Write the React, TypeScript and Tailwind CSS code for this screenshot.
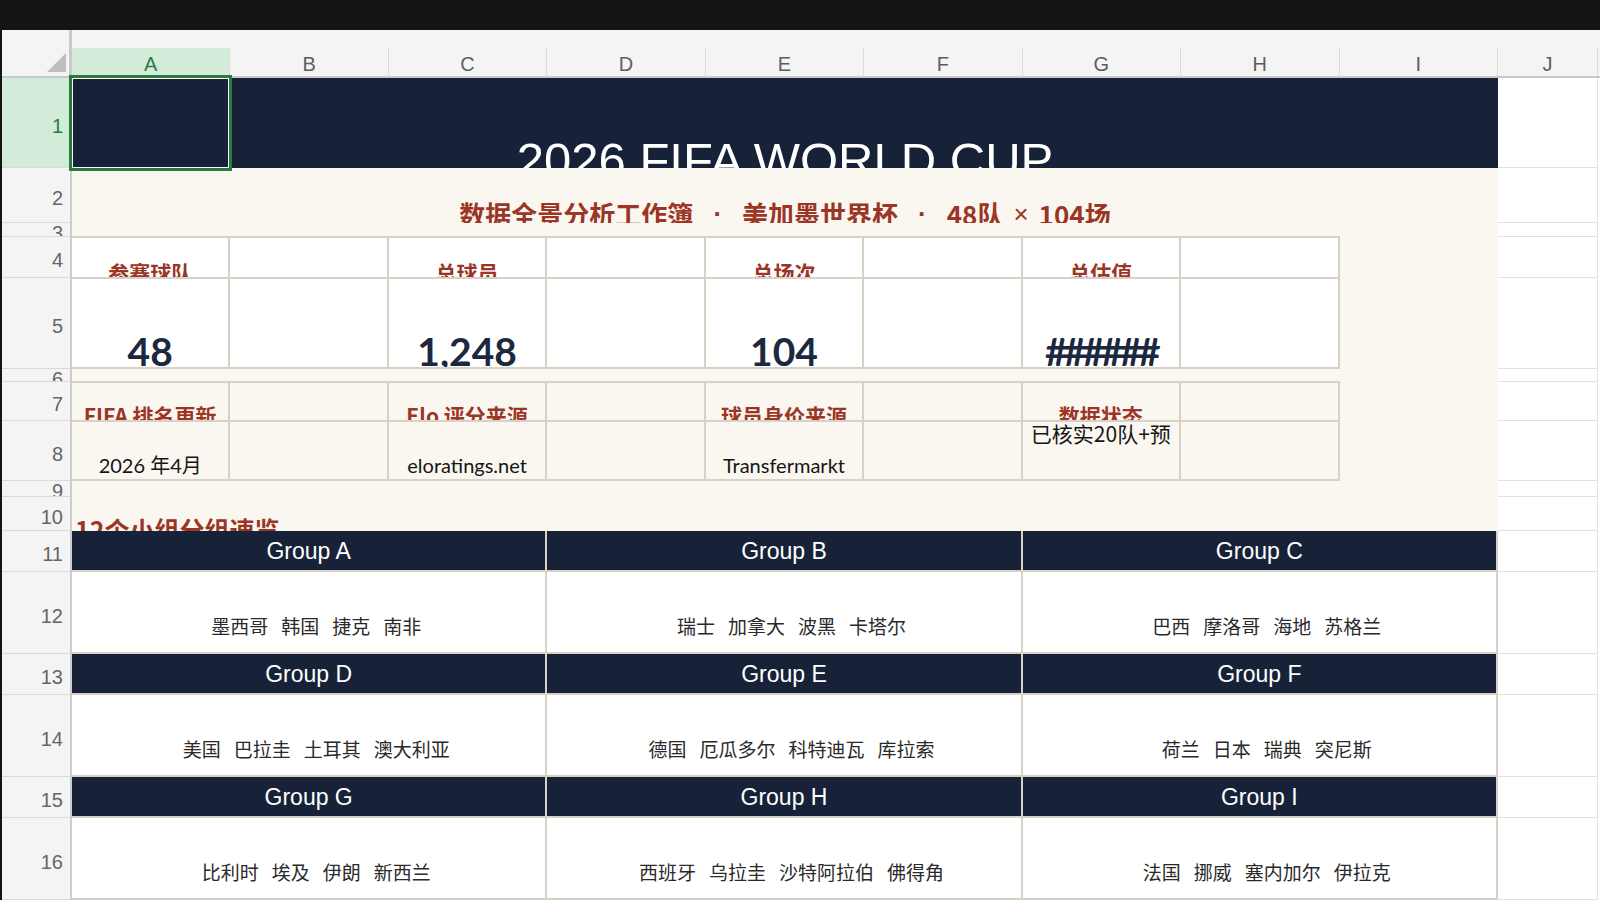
import React from 'react';

function cn(...parts: Array<string | false | undefined>) {
  return parts.filter(Boolean).join(' ');
}

const COLUMNS = ['A', 'B', 'C', 'D', 'E', 'F', 'G', 'H', 'I'];

// sheet rows and their heights; short rows keep their number pinned to the top
const ROWS = [
  { n: 1, h: 'h-[90px]', short: false },
  { n: 2, h: 'h-[55px]', short: false },
  { n: 3, h: 'h-[14px]', short: true },
  { n: 4, h: 'h-[41px]', short: false },
  { n: 5, h: 'h-[91px]', short: false },
  { n: 6, h: 'h-[13px]', short: true },
  { n: 7, h: 'h-[39px]', short: false },
  { n: 8, h: 'h-[60px]', short: false },
  { n: 9, h: 'h-[16px]', short: true },
  { n: 10, h: 'h-[34px]', short: false },
  { n: 11, h: 'h-[41px]', short: false },
  { n: 12, h: 'h-[82px]', short: false },
  { n: 13, h: 'h-[41px]', short: false },
  { n: 14, h: 'h-[82px]', short: false },
  { n: 15, h: 'h-[41px]', short: false },
  { n: 16, h: 'h-[82px]', short: false },
];

const KPIS = [
  { label: '参赛球队', value: '48' },
  { label: '总球员', value: '1,248' },
  { label: '总场次', value: '104' },
  { label: '总估值', value: '######' },
];

const SOURCES = [
  { label: 'FIFA 排名更新', value: '2026 年4月', top: false },
  { label: 'Elo 评分来源', value: 'eloratings.net', top: false },
  { label: '球员身价来源', value: 'Transfermarkt', top: false },
  { label: '数据状态', value: '已核实20队+预', top: true },
];

const GROUPS: Array<{ name: string; teams: string[] }> = [
  { name: 'Group A', teams: ['墨西哥', '韩国', '捷克', '南非'] },
  { name: 'Group B', teams: ['瑞士', '加拿大', '波黑', '卡塔尔'] },
  { name: 'Group C', teams: ['巴西', '摩洛哥', '海地', '苏格兰'] },
  { name: 'Group D', teams: ['美国', '巴拉圭', '土耳其', '澳大利亚'] },
  { name: 'Group E', teams: ['德国', '厄瓜多尔', '科特迪瓦', '库拉索'] },
  { name: 'Group F', teams: ['荷兰', '日本', '瑞典', '突尼斯'] },
  { name: 'Group G', teams: ['比利时', '埃及', '伊朗', '新西兰'] },
  { name: 'Group H', teams: ['西班牙', '乌拉圭', '沙特阿拉伯', '佛得角'] },
  { name: 'Group I', teams: ['法国', '挪威', '塞内加尔', '伊拉克'] },
];

const cellBorder = 'border-r-2 border-b-2 border-[#d8d2c6]';
const cjk = "font-['Noto_Sans_CJK_SC',sans-serif]";
const latin = "font-['Liberation_Sans',sans-serif]";
const lato = "font-['Lato','Noto_Sans_CJK_SC',sans-serif]";

function ColumnHeaders() {
  return (
    <div className="flex h-[48px] border-b-2 border-[#c8c8c8] bg-[#f4f4f4]">
      <div className="flex w-[70px] shrink-0 items-end justify-end border-r-[3px] border-[#c9c9c9] pb-[4px] pr-[3px]">
        <svg width="19" height="19" viewBox="0 0 19 19">
          <path d="M19 0V19H0Z" fill="#bdbdbd" />
        </svg>
      </div>
      {COLUMNS.map((c) => (
        <div
          key={c}
          className={cn(
            'mt-auto flex h-[28px] w-[158.44px] shrink-0 items-center justify-center border-r border-[#dcdcdc] pt-[4px] text-[20px] leading-[20px]',
            c === 'A' ? 'bg-[#d3ebd9] text-[#2d7a44]' : 'text-[#5e5e5e]'
          )}
        >
          {c}
        </div>
      ))}
      <div className="mt-auto flex h-[28px] w-[100px] shrink-0 items-center justify-center border-r border-[#dcdcdc] pt-[4px] text-[20px] leading-[20px] text-[#5e5e5e]">
        J
      </div>
      <div className="flex-1" />
    </div>
  );
}

function RowHeaders() {
  return (
    <div className="flex w-[70px] shrink-0 flex-col border-r-2 border-[#cdcdcd] bg-[#f4f4f4]">
      {ROWS.map((r) => (
        <div
          key={r.n}
          className={cn(
            r.h,
            'flex shrink-0 justify-end overflow-hidden border-b border-[#d9d9d9] pr-[7px] text-[20px] leading-[20px] [align-items:safe_center]',
            r.n === 1 ? 'bg-[#d3ebd9] text-[#2d7a44]' : 'text-[#666666]'
          )}
        >
          <span className={r.short ? '' : 'relative top-[3px]'}>{r.n}</span>
        </div>
      ))}
    </div>
  );
}

function ColumnJ() {
  return (
    <div className="flex w-[100px] shrink-0 flex-col bg-white">
      {ROWS.map((r) => (
        <div key={r.n} className={cn(r.h, 'shrink-0 border-r border-b border-[#e2e2e2]')} />
      ))}
    </div>
  );
}

function KpiTable() {
  return (
    <div className="mt-[13px] grid w-[1267.5px] grid-cols-[repeat(8,minmax(0,1fr))] grid-rows-[41px_90px] border-t-2 border-[#d8d2c6] bg-white">
      {KPIS.flatMap((k) => [
        <div key={k.label} className={cn(cellBorder, 'flex justify-center overflow-hidden pt-[24px]')}>
          <span className={cn(cjk, 'whitespace-nowrap text-[21px] font-bold leading-[21px] text-[#9b3526]')}>
            {k.label}
          </span>
        </div>,
        <div key={`${k.label}-b`} className={cellBorder} />,
      ])}
      {KPIS.flatMap((k) => [
        <div key={k.value} className={cn(cellBorder, 'flex justify-center overflow-hidden pt-[53px]')}>
          <span
            className={cn(
              lato,
              'whitespace-nowrap text-[39px] font-bold leading-[39px] text-[#1b2840]',
              k.value.startsWith('#') && 'tracking-[-4px]'
            )}
          >
            {k.value}
          </span>
        </div>,
        <div key={`${k.value}-b`} className={cellBorder} />,
      ])}
    </div>
  );
}

function SourceTable() {
  return (
    <div className="mt-[12px] grid w-[1267.5px] grid-cols-[repeat(8,minmax(0,1fr))] grid-rows-[39px_59px] border-t-2 border-[#d8d2c6]">
      {SOURCES.flatMap((s) => [
        <div key={s.label} className={cn(cellBorder, 'flex justify-center overflow-hidden pt-[22px]')}>
          <span className={cn(cjk, 'whitespace-nowrap text-[21px] font-bold leading-[21px] text-[#9b3526]')}>
            {s.label}
          </span>
        </div>,
        <div key={`${s.label}-b`} className={cellBorder} />,
      ])}
      {SOURCES.flatMap((s) => [
        <div
          key={s.value}
          className={cn(cellBorder, 'flex justify-center overflow-hidden', s.top ? 'pt-[1px]' : 'pt-[31px]')}
        >
          {s.top ? (
            <span className={cn(cjk, 'whitespace-nowrap text-[21px] leading-[21px] text-[#151515]')}>{s.value}</span>
          ) : (
            <span className={cn(lato, 'whitespace-nowrap text-[20px] leading-[24px] text-[#151515]')}>{s.value}</span>
          )}
        </div>,
        <div key={`${s.value}-b`} className={cellBorder} />,
      ])}
    </div>
  );
}

function GroupGrid() {
  return (
    <div className="grid grid-cols-3">
      {GROUPS.map((g) => (
        <div key={g.name} className="flex flex-col">
          <div className={cn(cellBorder, 'flex h-[41px] items-center justify-center bg-[#172239] pt-[1px]')}>
            <span className="text-[23px] leading-[23px] text-white">{g.name}</span>
          </div>
          <div
            className={cn(
              cellBorder,
              cjk,
              'flex h-[82px] justify-center gap-[13px] overflow-hidden bg-white pl-[15px] pt-[44px] text-[19px] leading-[19px] text-[#2a2a2a]'
            )}
          >
            {g.teams.map((t) => (
              <span key={t} className="whitespace-nowrap">
                {t}
              </span>
            ))}
          </div>
        </div>
      ))}
    </div>
  );
}

export default function App() {
  return (
    <div className="relative h-[900px] w-[1600px] overflow-hidden bg-[#141414] font-['Liberation_Sans',sans-serif]">
      <div className="h-[30px]" />
      <div className="ml-[2px] flex flex-col bg-white">
        <ColumnHeaders />
        <div className="flex">
          <RowHeaders />
          <div className="flex w-[1426px] shrink-0 flex-col">
            {/* row 1: title banner */}
            <div className="flex h-[90px] justify-center overflow-hidden bg-[#172239] pt-[58px]">
              <span className="whitespace-nowrap text-[49px] leading-[49px] text-white">2026 FIFA WORLD CUP</span>
            </div>
            {/* rows 2-10 */}
            <div className="flex flex-col bg-[#faf7f0]">
              <div
                className={cn(
                  cjk,
                  'flex h-[55px] justify-center overflow-hidden whitespace-nowrap pt-[33px] text-[26px] font-bold leading-[26px] text-[#9b3526]'
                )}
              >
                <span>数据全景分析工作簿</span>
                <span className={cn(latin, 'mx-[20px]')}>·</span>
                <span>美加墨世界杯</span>
                <span className={cn(latin, 'mx-[20px]')}>·</span>
                <span>48队</span>
                <span className={cn(latin, 'mx-[10px] font-normal')}>×</span>
                <span>104场</span>
              </div>
              <KpiTable />
              <SourceTable />
              <div className="mt-[16px] h-[34px] overflow-hidden pl-[3px] pt-[20px]">
                <span className={cn(cjk, 'whitespace-nowrap text-[25px] font-bold leading-[25px] text-[#9b3526]')}>
                  12个小组分组速览
                </span>
              </div>
            </div>
            <GroupGrid />
          </div>
          <ColumnJ />
          <div className="flex-1 bg-white" />
        </div>
      </div>
      {/* active cell A1 */}
      <div className="absolute left-[69px] top-[75px] h-[96px] w-[163px] border-[3px] border-[#2a7a3e] shadow-[inset_0_0_0_1px_#ffffff]" />
    </div>
  );
}
